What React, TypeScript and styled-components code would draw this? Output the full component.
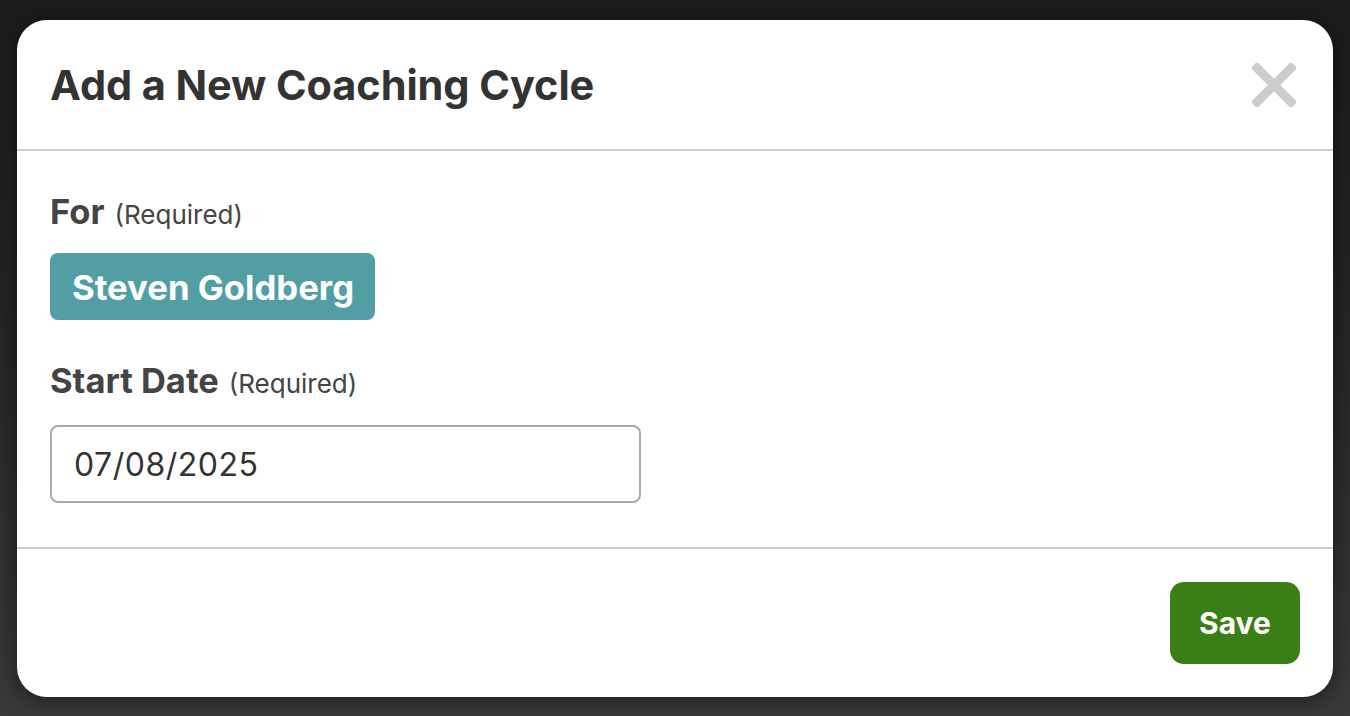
import React from "react";
import styled, { createGlobalStyle } from "styled-components";

const GlobalStyle = createGlobalStyle`
  html, body {
    margin: 0;
    padding: 0;
    height: 100%;
  }
  body {
    font-family: Inter, "Noto Sans", "Liberation Sans", sans-serif;
    background: linear-gradient(180deg, #1b1b1b 0%, #242424 40%, #3a3a3a 100%);
  }
`;

const Backdrop = styled.div`
  height: 716px;
  box-sizing: border-box;
  padding: 20px 17px 19px 17px;
  display: flex;
`;

const Modal = styled.div`
  flex: 1;
  background: #fff;
  border-radius: 30px;
  display: flex;
  flex-direction: column;
  overflow: hidden;
  box-shadow: 0 4px 24px rgba(0, 0, 0, 0.5);
`;

const Header = styled.div`
  height: 129px;
  border-bottom: 2px solid #cccccc;
  display: flex;
  align-items: center;
  justify-content: space-between;
  padding: 0 36px 0 33px;
`;

const Title = styled.h1`
  margin: 0;
  font-size: 41.5px;
  font-weight: 700;
  color: #333333;
  letter-spacing: -0.1px;
`;

const CloseButton = styled.button`
  border: none;
  background: none;
  padding: 0;
  width: 46px;
  height: 46px;
  display: flex;
  align-items: center;
  justify-content: center;
  cursor: pointer;
`;

const Body = styled.div`
  flex: 1;
  border-bottom: 2px solid #cccccc;
  padding: 40px 33px 0 33px;
  display: flex;
  flex-direction: column;
`;

const Label = styled.div<{ $gap: number }>`
  font-size: 34.5px;
  font-weight: 700;
  color: #444444;
  line-height: 42px;
  margin-bottom: ${(p) => p.$gap}px;
`;

const Hint = styled.span`
  font-size: 26px;
  font-weight: 400;
  color: #444444;
  margin-left: 10px;
`;

const Chip = styled.div`
  align-self: flex-start;
  background: #519fa5;
  color: #ffffff;
  font-size: 34.7px;
  font-weight: 700;
  height: 67px;
  padding: 0 21px 0 22px;
  border-radius: 8px;
  display: flex;
  align-items: center;
  margin-bottom: 40px;
`;

const DateInput = styled.input`
  flex-shrink: 0;
  width: 591px;
  height: 78px;
  box-sizing: border-box;
  border: 2px solid #aaaaaa;
  border-radius: 8px;
  padding: 0 22px;
  font-family: Inter, "Noto Sans", "Liberation Sans", sans-serif;
  font-size: 32px;
  letter-spacing: 0.5px;
  color: #333333;
  outline: none;
`;

const Footer = styled.div`
  height: 148px;
  box-sizing: border-box;
  padding: 33px 33px;
  display: flex;
  justify-content: flex-end;
`;

const SaveButton = styled.button`
  width: 130px;
  height: 82px;
  border: none;
  border-radius: 14px;
  background: #3a7f16;
  color: #ffffff;
  font-family: Inter, "Noto Sans", "Liberation Sans", sans-serif;
  font-size: 30px;
  font-weight: 700;
  cursor: pointer;
`;

function CloseIcon() {
  return (
    <svg width="44" height="44" viewBox="0 0 44 44">
      <path d="M5 5 L39 39 M39 5 L5 39" stroke="#cccccc" strokeWidth="9" strokeLinecap="square" />
    </svg>
  );
}

export default function App() {
  return (
    <>
      <GlobalStyle />
      <Backdrop>
        <Modal>
          <Header>
            <Title>Add a New Coaching Cycle</Title>
            <CloseButton aria-label="Close">
              <CloseIcon />
            </CloseButton>
          </Header>
          <Body>
            <Label $gap={17}>
              For<Hint>(Required)</Hint>
            </Label>
            <Chip>Steven Goldberg</Chip>
            <Label $gap={20}>
              Start Date<Hint>(Required)</Hint>
            </Label>
            <DateInput type="text" defaultValue="07/08/2025" />
          </Body>
          <Footer>
            <SaveButton>Save</SaveButton>
          </Footer>
        </Modal>
      </Backdrop>
    </>
  );
}
